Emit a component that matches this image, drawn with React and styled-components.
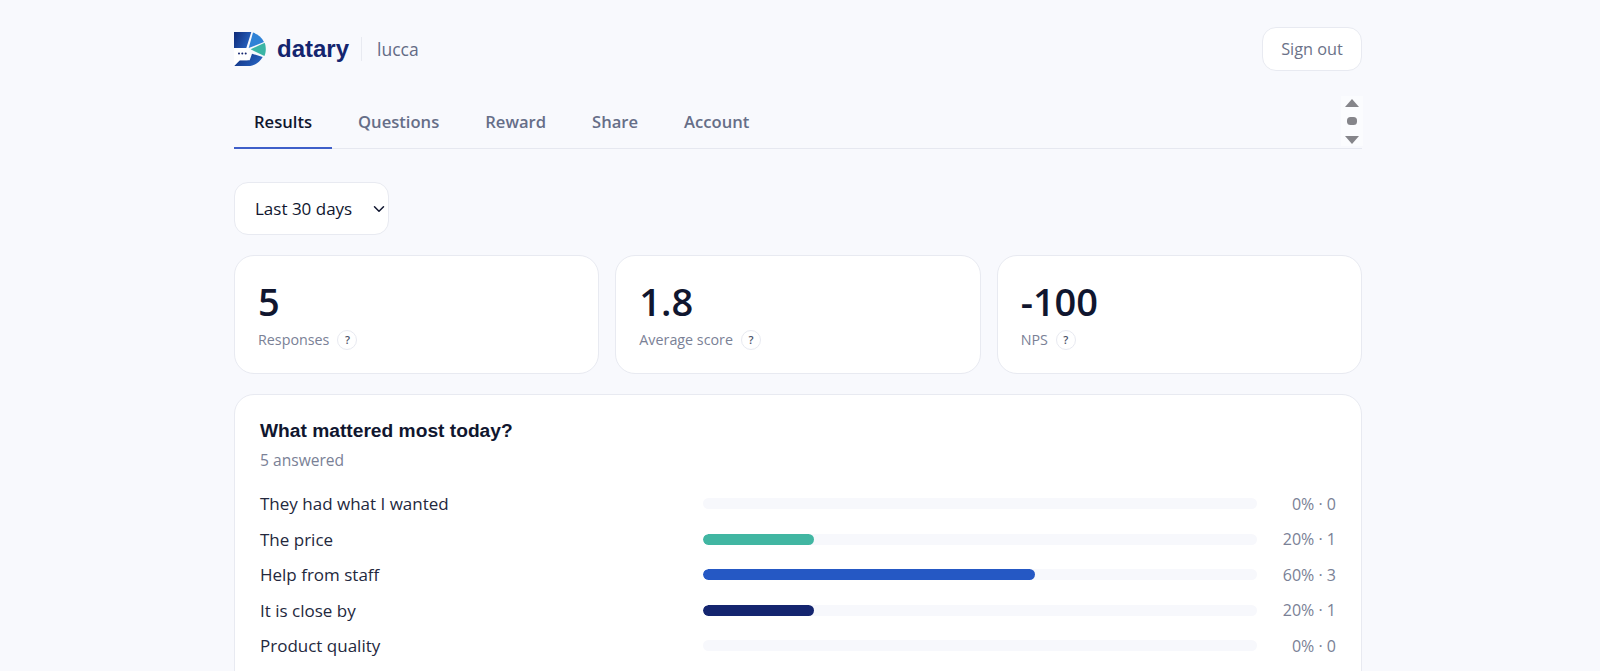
import styled, { createGlobalStyle } from 'styled-components';
import { ChevronDown } from 'lucide-react';

const GlobalStyle = createGlobalStyle`
  html, body {
    margin: 0;
    height: 100%;
    overflow: hidden;
    background: #f8f9fd;
    color: #10162f;
    font-family: "Open Sans", "Noto Sans", sans-serif;
  }
`;

const Page = styled.div`
  width: 1128px;
  margin-left: 234px;
`;

const Header = styled.header`
  display: flex;
  align-items: center;
  justify-content: space-between;
  padding-top: 27px;
`;

const Brand = styled.div`
  display: flex;
  align-items: center;
`;

const BrandName = styled.span`
  margin-left: 11px;
  font-family: "Liberation Sans", Arial, sans-serif;
  font-weight: 700;
  font-size: 24px;
  color: #14256f;
`;

const BrandDivider = styled.span`
  width: 1px;
  height: 24px;
  margin: 0 15px 0 12px;
  background: #e8eaf1;
`;

const ClientName = styled.span`
  font-size: 17.5px;
  font-weight: 500;
  color: #646c86;
`;

const SignOut = styled.button`
  width: 100px;
  height: 44px;
  border: 1px solid #e8eaf1;
  border-radius: 14px;
  background: #fff;
  font: inherit;
  font-size: 16.3px;
  color: #6b7288;
`;

const TabBar = styled.nav`
  position: relative;
  display: flex;
  gap: 6px;
  margin-top: 27px;
  border-bottom: 1px solid #e6e8f0;
`;

const Tab = styled.a`
  padding: 12px 20px 13px;
  font-size: 16.6px;
  font-weight: 600;
  line-height: 24px;
  margin-bottom: -1px;
  color: ${({ $active }) => ($active ? '#10162f' : '#666e88')};
  border-bottom: 2px solid ${({ $active }) => ($active ? '#3f5fc9' : 'transparent')};
`;

const ScrollArrows = styled.svg`
  position: absolute;
  right: -1px;
  top: -2px;
  width: 22px;
  height: 50px;
`;

const SelectWrap = styled.div`
  position: relative;
  width: 155px;
  margin-top: 33px;
  color: #10162f;

  svg {
    position: absolute;
    right: 1px;
    top: 18px;
    pointer-events: none;
  }
`;

const RangeSelect = styled.select`
  display: block;
  appearance: none;
  width: 100%;
  height: 53px;
  padding: 0 24px 0 20px;
  border: 1px solid #e8eaf1;
  border-radius: 14px;
  background: #fff;
  font: inherit;
  font-size: 17px;
  color: #10162f;
`;

const Stats = styled.section`
  display: grid;
  grid-template-columns: repeat(3, 1fr);
  gap: 16px;
  margin-top: 20px;
`;

const Card = styled.div`
  background: #fff;
  border: 1px solid #e8eaf1;
  border-radius: 20px;
  box-sizing: border-box;
`;

const StatCard = styled(Card)`
  height: 119px;
  padding: 20px 23px;
`;

const StatValue = styled.div`
  font-size: 38px;
  font-weight: 600;
  line-height: 50px;
  color: #10162f;
`;

const StatLabel = styled.div`
  display: flex;
  align-items: center;
  gap: 8px;
  margin-top: 4px;
  font-size: 14.3px;
  line-height: 20px;
  color: #7a8196;
`;

const HelpBadge = styled.span`
  display: inline-flex;
  align-items: center;
  justify-content: center;
  width: 18px;
  height: 18px;
  border: 1px solid #e8eaf1;
  border-radius: 50%;
  font-size: 11px;
  font-weight: 600;
  color: #4b5268;
`;

const QuestionCard = styled(Card)`
  margin-top: 20px;
  padding: 24px 25px 26px;
`;

const QuestionTitle = styled.h2`
  margin: 0;
  font-family: "Liberation Sans", Arial, sans-serif;
  font-size: 19.2px;
  font-weight: 700;
  line-height: 24px;
  color: #10162f;
`;

const AnsweredCount = styled.div`
  margin-top: 6px;
  font-size: 15.6px;
  line-height: 22px;
  color: #7a8196;
`;

const Rows = styled.div`
  margin-top: 15px;
`;

const Row = styled.div`
  display: grid;
  grid-template-columns: 443px 1fr 79px;
  align-items: center;
  height: 35.5px;
`;

const RowLabel = styled.span`
  font-size: 17px;
  color: #23283d;
`;

const Track = styled.div`
  height: 11px;
  border-radius: 6px;
  background: #f7f8fc;
  overflow: hidden;
`;

const Fill = styled.div`
  height: 100%;
  border-radius: 6px;
  background: ${({ $color }) => $color};
`;

const RowValue = styled.span`
  font-size: 16px;
  text-align: right;
  color: #7a8196;
`;

const tabs = ['Results', 'Questions', 'Reward', 'Share', 'Account'];

const stats = [
  { value: '5', label: 'Responses' },
  { value: '1.8', label: 'Average score' },
  { value: '-100', label: 'NPS' },
];

const answers = [
  { label: 'They had what I wanted', pct: 0, count: 0, color: '#41b6a2' },
  { label: 'The price', pct: 20, count: 1, color: '#41b6a2' },
  { label: 'Help from staff', pct: 60, count: 3, color: '#2558c4' },
  { label: 'It is close by', pct: 20, count: 1, color: '#14256f' },
  { label: 'Product quality', pct: 0, count: 0, color: '#2558c4' },
];

function Logo() {
  return (
    <svg width="32" height="34" viewBox="0 0 32 34">
      <defs>
        <linearGradient id="logoDark" x1="0" y1="0" x2="1" y2="0.4">
          <stop offset="0" stopColor="#0f2a78" />
          <stop offset="1" stopColor="#2560bd" />
        </linearGradient>
      </defs>
      <path d="M0 0H17.3L12.3 16H0Z" fill="url(#logoDark)" />
      <path d="M19 .6C23.8 2 27.8 5.4 30 10L14.7 16Z" fill="#2f82d6" />
      <path d="M30.7 10.7C32 14 32.4 20 30.4 24L16.6 17.3Z" fill="#3bb5a5" />
      <path d="M28.7 25C25.6 30.6 20.5 34 14 34H0L5.7 28.3H15.7L18 21.7Z" fill="url(#logoDark)" />
      <path d="M0 16H13C14.5 16 15.7 17.2 15.7 18.7V25.6C15.7 27.1 14.5 28.3 13 28.3H5.7L0 34Z" fill="#fff" />
      <circle cx="5" cy="21.5" r="1" fill="#14256f" />
      <circle cx="8.3" cy="21.5" r="1" fill="#14256f" />
      <circle cx="11.7" cy="21.5" r="1" fill="#14256f" />
    </svg>
  );
}

export default function App() {
  return (
    <Page>
      <GlobalStyle />
      <Header>
        <Brand>
          <Logo />
          <BrandName>datary</BrandName>
          <BrandDivider />
          <ClientName>lucca</ClientName>
        </Brand>
        <SignOut>Sign out</SignOut>
      </Header>

      <TabBar>
        {tabs.map((tab, i) => (
          <Tab key={tab} $active={i === 0}>{tab}</Tab>
        ))}
        <ScrollArrows viewBox="0 0 22 50">
          <rect width="22" height="50" fill="#fbfcfe" />
          <path d="M11 3L18 11H4Z" fill="#85858a" />
          <rect x="6" y="21" width="10" height="8" rx="3.5" fill="#85858a" />
          <path d="M11 48L18 40H4Z" fill="#85858a" />
        </ScrollArrows>
      </TabBar>

      <SelectWrap>
        <RangeSelect defaultValue="30">
          <option value="30">Last 30 days</option>
        </RangeSelect>
        <ChevronDown size={18} strokeWidth={2} />
      </SelectWrap>

      <Stats>
        {stats.map((stat) => (
          <StatCard key={stat.label}>
            <StatValue>{stat.value}</StatValue>
            <StatLabel>
              {stat.label}
              <HelpBadge>?</HelpBadge>
            </StatLabel>
          </StatCard>
        ))}
      </Stats>

      <QuestionCard>
        <QuestionTitle>What mattered most today?</QuestionTitle>
        <AnsweredCount>5 answered</AnsweredCount>
        <Rows>
          {answers.map((answer) => (
            <Row key={answer.label}>
              <RowLabel>{answer.label}</RowLabel>
              <Track>
                <Fill $color={answer.color} style={{ width: `${answer.pct}%` }} />
              </Track>
              <RowValue>{answer.pct}% · {answer.count}</RowValue>
            </Row>
          ))}
        </Rows>
      </QuestionCard>
    </Page>
  );
}
